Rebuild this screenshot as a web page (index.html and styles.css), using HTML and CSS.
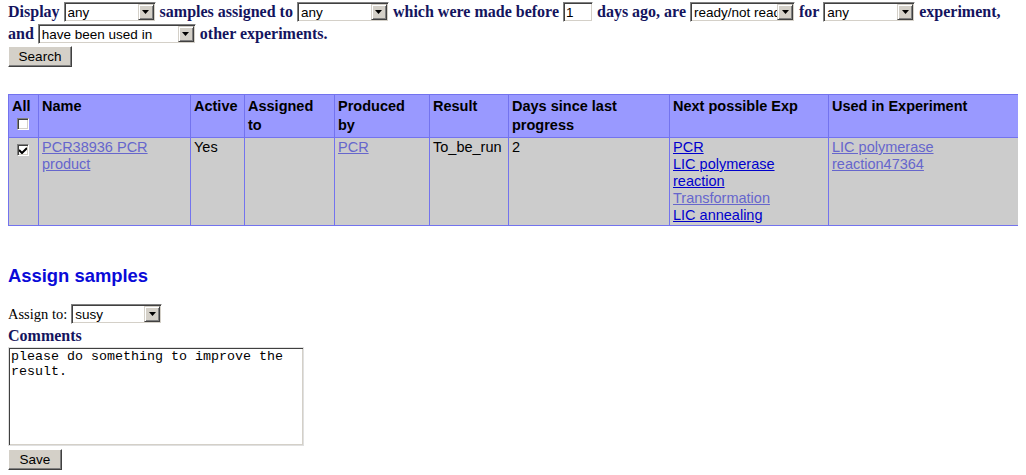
FILE: index.html
```html
<!DOCTYPE html>
<html>
<head>
<meta charset="utf-8">
<title>Samples</title>
<link rel="stylesheet" href="styles.css">
</head>
<body>
<form class="filters">
  <div class="line line-1">Display <span class="sel w-any"><select><option>any</option></select><span class="arrow"><svg width="7" height="4" viewBox="0 0 7 4"><path d="M0 0h7L3.5 4z" fill="#000"/></svg></span></span> samples assigned to <span class="sel w-any"><select><option>any</option></select><span class="arrow"><svg width="7" height="4" viewBox="0 0 7 4"><path d="M0 0h7L3.5 4z" fill="#000"/></svg></span></span> which were made before <input class="txt w-days" type="text" value="1"> days ago, are <span class="sel w-ready"><select><option>ready/not ready</option></select><span class="arrow"><svg width="7" height="4" viewBox="0 0 7 4"><path d="M0 0h7L3.5 4z" fill="#000"/></svg></span></span> for <span class="sel w-any"><select><option>any</option></select><span class="arrow"><svg width="7" height="4" viewBox="0 0 7 4"><path d="M0 0h7L3.5 4z" fill="#000"/></svg></span></span> experiment,</div>
  <div class="line line-2">and <span class="sel w-and"><select><option>have been used in</option></select><span class="arrow"><svg width="7" height="4" viewBox="0 0 7 4"><path d="M0 0h7L3.5 4z" fill="#000"/></svg></span></span> other experiments.</div>
  <button type="button" class="btn btn-search">Search</button>
</form>

<table class="samples">
  <colgroup>
    <col class="c-all">
    <col class="c-name">
    <col class="c-active">
    <col class="c-assigned">
    <col class="c-produced">
    <col class="c-result">
    <col class="c-days">
    <col class="c-next">
    <col class="c-used">
  </colgroup>
  <thead>
    <tr>
      <th>All<span class="cb cb-head"></span></th>
      <th>Name</th>
      <th>Active</th>
      <th>Assigned<br>to</th>
      <th>Produced<br>by</th>
      <th>Result</th>
      <th>Days since last<br>progress</th>
      <th>Next possible Exp</th>
      <th>Used in Experiment</th>
    </tr>
  </thead>
  <tbody>
    <tr>
      <td><span class="cb cb-body"><svg width="8" height="7" viewBox="0 0 8 7"><path d="M0 3l3 3 5-5" fill="none" stroke="#000" stroke-width="2"/></svg></span></td>
      <td><a class="visited" href="#">PCR38936 PCR<br>product</a></td>
      <td>Yes</td>
      <td></td>
      <td><a class="visited" href="#">PCR</a></td>
      <td>To_be_run</td>
      <td>2</td>
      <td><a href="#">PCR</a><br><a href="#">LIC polymerase<br>reaction</a><br><a class="visited" href="#">Transformation</a><br><a href="#">LIC annealing</a></td>
      <td><a class="visited" href="#">LIC polymerase<br>reaction47364</a></td>
    </tr>
  </tbody>
</table>

<h2 class="section-title">Assign samples</h2>
<form class="assign">
  <div class="assign-row"><span>Assign to:</span><span class="sel w-user"><select><option>susy</option></select><span class="arrow"><svg width="7" height="4" viewBox="0 0 7 4"><path d="M0 0h7L3.5 4z" fill="#000"/></svg></span></span></div>
  <div class="comments-label">Comments</div>
  <textarea class="comments">please do something to improve the result.</textarea>
  <button type="button" class="btn btn-save">Save</button>
</form>
</body>
</html>
```
FILE: styles.css
```css
html, body {
  background: #ffffff;
}
body {
  margin: 0 8px 8px 8px;
  font-family: "Liberation Serif", "Times New Roman", serif;
  color: #000;
}

.filters {
  margin: 0;
  font-size: 16px;
  font-weight: bold;
  color: #14145e;
}
.line {
  white-space: nowrap;
}
.line-1 {
  height: 23px;
  line-height: 23px;
}
.line-2 {
  height: 22px;
  line-height: 22px;
}

/* select look-alike (classic Windows) */
.sel {
  position: relative;
  display: inline-block;
  vertical-align: middle;
  box-sizing: border-box;
  height: 20px;
  border: 1px solid;
  border-color: #808080 #ffffff #ffffff #808080;
  box-shadow: inset 1px 1px 0 #404040, inset -1px -1px 0 #d4d0c8;
  background: #fff;
  overflow: hidden;
  margin-top: -2px;
}
.sel select {
  -webkit-appearance: none;
  appearance: none;
  display: block;
  box-sizing: border-box;
  width: 100%;
  height: 100%;
  border: 0;
  margin: 0;
  padding: 0 0 0 3px;
  background: transparent;
  font-family: "Liberation Sans", Arial, sans-serif;
  font-size: 13.5px;
  font-weight: normal;
  color: #000;
  outline: none;
}
.sel .arrow {
  position: absolute;
  top: 1px;
  right: 1px;
  bottom: 1px;
  width: 16px;
  box-sizing: border-box;
  background: #d4d0c8;
  border: 1px solid;
  border-color: #d4d0c8 #404040 #404040 #d4d0c8;
  box-shadow: inset 1px 1px 0 #ffffff, inset -1px -1px 0 #808080;
  display: flex;
  align-items: center;
  justify-content: center;
}
.w-any { width: 92px; }
.w-ready { width: 105px; }
.w-and { width: 158px; }
.w-user { width: 91px; }

.txt {
  display: inline-block;
  vertical-align: middle;
  box-sizing: border-box;
  height: 20px;
  margin: -2px 0 0 0;
  padding: 0 0 0 2px;
  border: 1px solid;
  border-color: #808080 #ffffff #ffffff #808080;
  box-shadow: inset 1px 1px 0 #404040, inset -1px -1px 0 #d4d0c8;
  background: #fff;
  font-family: "Liberation Sans", Arial, sans-serif;
  font-size: 13.5px;
  font-weight: normal;
  color: #000;
  outline: none;
}
.w-days { width: 30px; }

.btn {
  display: block;
  box-sizing: border-box;
  height: 21px;
  padding: 0;
  background: #d4d0c8;
  border: 1px solid;
  border-color: #ffffff #404040 #404040 #ffffff;
  box-shadow: inset -1px -1px 0 #808080, inset 1px 1px 0 #d4d0c8;
  font-family: "Liberation Sans", Arial, sans-serif;
  font-size: 13.5px;
  color: #000;
}
.btn-search {
  width: 64px;
  margin-top: 1px;
}
.btn-save {
  width: 54px;
  margin-top: 3px;
}

/* table */
.samples {
  width: 1012px;
  margin-top: 27px;
  border-collapse: collapse;
  table-layout: fixed;
  font-family: "Liberation Sans", Arial, sans-serif;
  font-size: 14.5px;
}
.samples th,
.samples td {
  border: 1px solid #7373ee;
  text-align: left;
  vertical-align: top;
  padding: 1px 3px;
  line-height: 17px;
  overflow: hidden;
}
.samples th {
  background: #9999ff;
  font-weight: bold;
  padding: 2px 3px;
  line-height: 19px;
}
.samples td {
  background: #cccccc;
  height: 85px;
}
.c-all { width: 30px; }
.c-name { width: 152px; }
.c-active { width: 54px; }
.c-assigned { width: 90px; }
.c-produced { width: 95px; }
.c-result { width: 79px; }
.c-days { width: 161px; }
.c-next { width: 159px; }
.c-used { width: 192px; }

.samples a {
  color: #0000cc;
  text-decoration: underline;
}
.samples a.visited {
  color: #6666cc;
}

.cb {
  display: block;
  box-sizing: border-box;
  width: 12px;
  height: 12px;
  background: #fff;
  border: 1px solid;
  border-color: #808080 #ffffff #ffffff #808080;
  box-shadow: inset 1px 1px 0 #404040, inset -1px -1px 0 #d4d0c8;
  position: relative;
}
.cb svg {
  position: absolute;
  left: 1px;
  top: 2px;
}
.cb-head {
  margin: 2px 0 0 5px;
}
.cb-body {
  margin: 5px 0 0 5px;
}

/* assign */
.section-title {
  margin: 39px 0 15px 0;
  font-family: "Liberation Sans", Arial, sans-serif;
  font-size: 18.4px;
  line-height: 22px;
  font-weight: bold;
  color: #0a0ad8;
}
.assign {
  margin: 0;
}
.assign-row {
  display: flex;
  align-items: center;
  gap: 4px;
  height: 24px;
  font-size: 14.5px;
}
.assign-row .sel {
  margin-top: 0;
}
.comments-label {
  margin-top: 1px;
  font-size: 16px;
  line-height: 18px;
  font-weight: bold;
  color: #14145e;
}
.comments {
  display: block;
  box-sizing: border-box;
  width: 296px;
  height: 99px;
  margin: 2px 0 0 0;
  padding: 1px 2px;
  resize: none;
  border: 1px solid;
  border-color: #808080 #ffffff #ffffff #808080;
  box-shadow: inset 1px 1px 0 #404040, inset -1px -1px 0 #d4d0c8;
  outline: 1px solid #e0e0e0;
  outline-offset: -1px;
  font-family: "Liberation Mono", "Courier New", monospace;
  font-size: 13.33px;
  line-height: 15px;
  color: #000;
  background: #fff;
}
```
